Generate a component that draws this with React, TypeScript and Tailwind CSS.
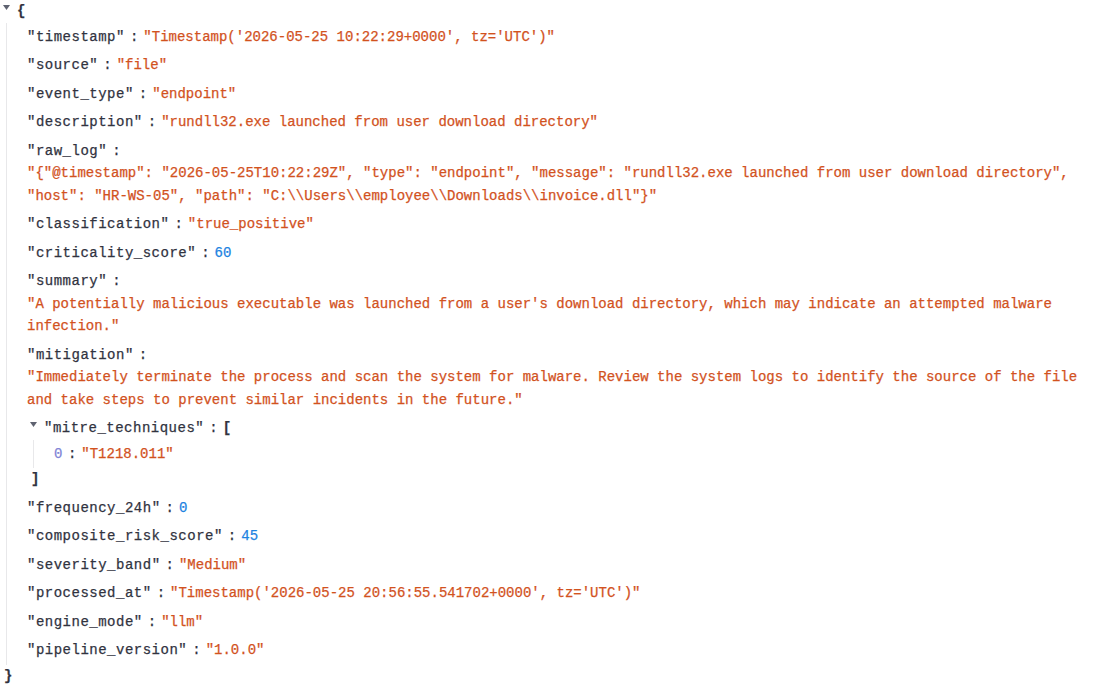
import React from "react";

const KEY = "text-[#31333f] tracking-[0.5px]";
const STR = "text-[#d2521e]";
const NUM = "text-[#1c83e1]";

type Val = { kind: "str" | "num"; v: string };

const rows: [string, Val][] = [
  ["timestamp", { kind: "str", v: "Timestamp('2026-05-25 10:22:29+0000', tz='UTC')" }],
  ["source", { kind: "str", v: "file" }],
  ["event_type", { kind: "str", v: "endpoint" }],
  ["description", { kind: "str", v: "rundll32.exe launched from user download directory" }],
  [
    "raw_log",
    {
      kind: "str",
      v: '{"@timestamp": "2026-05-25T10:22:29Z", "type": "endpoint", "message": "rundll32.exe launched from user download directory", "host": "HR-WS-05", "path": "C:\\\\Users\\\\employee\\\\Downloads\\\\invoice.dll"}',
    },
  ],
  ["classification", { kind: "str", v: "true_positive" }],
  ["criticality_score", { kind: "num", v: "60" }],
  [
    "summary",
    {
      kind: "str",
      v: "A potentially malicious executable was launched from a user's download directory, which may indicate an attempted malware infection.",
    },
  ],
  [
    "mitigation",
    {
      kind: "str",
      v: "Immediately terminate the process and scan the system for malware. Review the system logs to identify the source of the file and take steps to prevent similar incidents in the future.",
    },
  ],
];

const rows2: [string, Val][] = [
  ["frequency_24h", { kind: "num", v: "0" }],
  ["composite_risk_score", { kind: "num", v: "45" }],
  ["severity_band", { kind: "str", v: "Medium" }],
  ["processed_at", { kind: "str", v: "Timestamp('2026-05-25 20:56:55.541702+0000', tz='UTC')" }],
  ["engine_mode", { kind: "str", v: "llm" }],
  ["pipeline_version", { kind: "str", v: "1.0.0" }],
];

function Triangle() {
  return (
    <svg width="7" height="5" viewBox="0 0 7 5" className="inline-block align-top mt-[5px] ml-[3px]">
      <polygon points="0,0 7,0 3.5,5" fill="#5f6270" />
    </svg>
  );
}

function Colon() {
  return <span className="mx-[5px] text-[#31333f]">:</span>;
}

function Row({ k, val }: { k: string; val: Val }) {
  return (
    <div className="pt-[3px] pb-[3px] pl-[20px] pr-[5px]">
      <span className={KEY}>"{k}"</span>
      <Colon />
      <div className={"inline-block " + (val.kind === "str" ? STR : NUM)}>
        {val.kind === "str" ? `"${val.v}"` : val.v}
      </div>
    </div>
  );
}

export default function App() {
  return (
    <div
      className="w-[1098px] h-[686px] bg-white overflow-hidden text-[14px] leading-[22.5px] text-[#31333f] [-webkit-text-stroke:0.25px]"
      style={{ fontFamily: '"Liberation Mono", "DejaVu Sans Mono", monospace' }}
    >
      <div>
        <span className="inline-block w-[17px] align-top">
          <Triangle />
        </span>
        <span className="font-bold">{"{"}</span>
      </div>
      <div className="ml-[6px] border-l border-[#e8e8ea]">
        {rows.map(([k, v]) => (
          <Row key={k} k={k} val={v} />
        ))}
        <div className="pt-[3px] pb-[3px] pl-[20px] pr-[5px]">
          <div>
            <span className="inline-block w-[17px] align-top">
              <Triangle />
            </span>
            <span className={KEY}>"mitre_techniques"</span>
            <Colon />
            <span className="font-bold">[</span>
          </div>
          <div className="ml-[6px] border-l border-[#e8e8ea]">
            <div className="pt-[3px] pb-[3px] pl-[20px] pr-[5px]">
              <span className="text-[#8185d6] tracking-[0.5px]">0</span>
              <Colon />
              <div className={"inline-block " + STR}>"T1218.011"</div>
            </div>
          </div>
          <div className="pl-[4px] font-bold">]</div>
        </div>
        {rows2.map(([k, v]) => (
          <Row key={k} k={k} val={v} />
        ))}
      </div>
      <div className="pl-[4px] font-bold">{"}"}</div>
    </div>
  );
}
